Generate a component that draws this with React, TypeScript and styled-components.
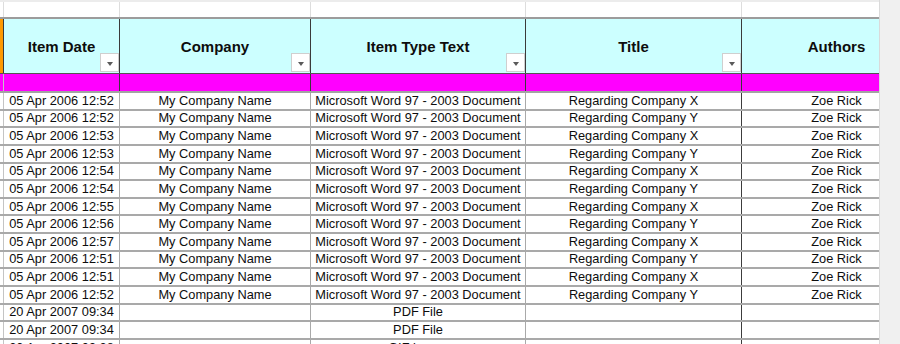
import React from 'react'
import styled, { createGlobalStyle } from 'styled-components'

const GlobalStyle = createGlobalStyle`
  html, body { margin:0; padding:0; background:#f0f0f0; overflow:hidden; }
  body { font-family:"Liberation Sans", Arial, sans-serif; }
`

const colWidths = [4, 116, 191, 215, 216, 190]

type Row = [string, string, string, string, string]

const rows: Row[] = [
  ['05 Apr 2006 12:52', 'My Company Name', 'Microsoft Word 97 - 2003 Document', 'Regarding Company X', 'Zoe Rick'],
  ['05 Apr 2006 12:52', 'My Company Name', 'Microsoft Word 97 - 2003 Document', 'Regarding Company Y', 'Zoe Rick'],
  ['05 Apr 2006 12:53', 'My Company Name', 'Microsoft Word 97 - 2003 Document', 'Regarding Company X', 'Zoe Rick'],
  ['05 Apr 2006 12:53', 'My Company Name', 'Microsoft Word 97 - 2003 Document', 'Regarding Company Y', 'Zoe Rick'],
  ['05 Apr 2006 12:54', 'My Company Name', 'Microsoft Word 97 - 2003 Document', 'Regarding Company X', 'Zoe Rick'],
  ['05 Apr 2006 12:54', 'My Company Name', 'Microsoft Word 97 - 2003 Document', 'Regarding Company Y', 'Zoe Rick'],
  ['05 Apr 2006 12:55', 'My Company Name', 'Microsoft Word 97 - 2003 Document', 'Regarding Company X', 'Zoe Rick'],
  ['05 Apr 2006 12:56', 'My Company Name', 'Microsoft Word 97 - 2003 Document', 'Regarding Company Y', 'Zoe Rick'],
  ['05 Apr 2006 12:57', 'My Company Name', 'Microsoft Word 97 - 2003 Document', 'Regarding Company X', 'Zoe Rick'],
  ['05 Apr 2006 12:51', 'My Company Name', 'Microsoft Word 97 - 2003 Document', 'Regarding Company Y', 'Zoe Rick'],
  ['05 Apr 2006 12:51', 'My Company Name', 'Microsoft Word 97 - 2003 Document', 'Regarding Company X', 'Zoe Rick'],
  ['05 Apr 2006 12:52', 'My Company Name', 'Microsoft Word 97 - 2003 Document', 'Regarding Company Y', 'Zoe Rick'],
  ['20 Apr 2007 09:34', '', 'PDF File', '', ''],
  ['20 Apr 2007 09:34', '', 'PDF File', '', ''],
  ['20 Apr 2007 09:38', '', 'GIF image', '', ''],
]

const headers = [
  { title: 'Item Date', filter: true },
  { title: 'Company', filter: true },
  { title: 'Item Type Text', filter: true },
  { title: 'Title', filter: true },
  { title: 'Authors', filter: false },
]

// grid line colours per column (right border), data area
const dataLines = ['#c4c4c4', '#a9a9a9', '#a9a9a9', '#a9a9a9', '#3c3c3c', '#a9a9a9']

export default function App() {
  return (
    <Viewport>
      <GlobalStyle />
      <Sheet>
        <GridRow $h={19} $top='2px solid #ececec' $bottom='2px solid #9c9c9c'>
          {colWidths.map((_, i) => <Cell key={i} $line='#dddddd' $bg='#fff' />)}
        </GridRow>

        <GridRow $h={55} $bottom='1px solid #555'>
          <Cell $line='#3a3a3a' $bg='#ff9900' />
          {headers.map(h => (
            <HeadCell key={h.title} $line='#3a3a3a' $bg='#ccffff'>
              <HeadText>{h.title}</HeadText>
              {h.filter && <FilterButton><Caret /></FilterButton>}
            </HeadCell>
          ))}
        </GridRow>

        <GridRow $h={19} $bottom='2px solid #a3a3a3'>
          {colWidths.map((_, i) => <Cell key={i} $line={i == 0 ? '#c4c4c4' : '#3a3a3a'} $bg='#ff00ff' />)}
        </GridRow>

        {rows.map((r, ri) => (
          <GridRow key={ri} $h={17.64} $bottom='2px solid #a9a9a9'>
            <Cell $line={dataLines[0]} $bg='#fff' />
            {r.map((v, ci) => (
              <Cell key={ci} $line={dataLines[ci + 1]} $bg='#fff'>{v}</Cell>
            ))}
          </GridRow>
        ))}
      </Sheet>
    </Viewport>
  )
}

const Viewport = styled.div` width:900px; height:344px; display:flex; background:#f0f0f0; overflow:hidden; `
const Sheet = styled.div` width:880px; flex:none; overflow:hidden; background:#fff; border-right:1px solid #dadada; box-sizing:border-box; `

const GridRow = styled.div<{ $h: number, $top?: string, $bottom: string }>`
  display:grid; grid-template-columns:${colWidths.map(w => w + 'px').join(' ')};
  width:${colWidths.reduce((a, b) => a + b, 0)}px;
  height:${p => p.$h}px; box-sizing:border-box; border-bottom:${p => p.$bottom};
  ${p => p.$top && `border-top:${p.$top};`}
`

const Cell = styled.div<{ $line: string, $bg: string }>`
  box-sizing:border-box; border-right:1px solid ${p => p.$line}; background:${p => p.$bg};
  display:flex; align-items:center; justify-content:center; overflow:hidden; white-space:nowrap;
  font-size:12.8px; color:#0d0d0d; line-height:14px;
`

const HeadCell = styled(Cell)` position:relative; `
const HeadText = styled.span` font-size:15px; font-weight:bold; color:#0d0d0d; margin-top:1px; `

const FilterButton = styled.div`
  position:absolute; right:0; bottom:1px; width:19px; height:19px; box-sizing:border-box;
  background:#fff; border:1px solid #cfcfcf; display:flex; align-items:center; justify-content:center;
`
const Caret = styled.div`
  width:0; height:0; margin-top:2px;
  border-left:3.5px solid transparent; border-right:3.5px solid transparent; border-top:4px solid #5a5a5a;
`
